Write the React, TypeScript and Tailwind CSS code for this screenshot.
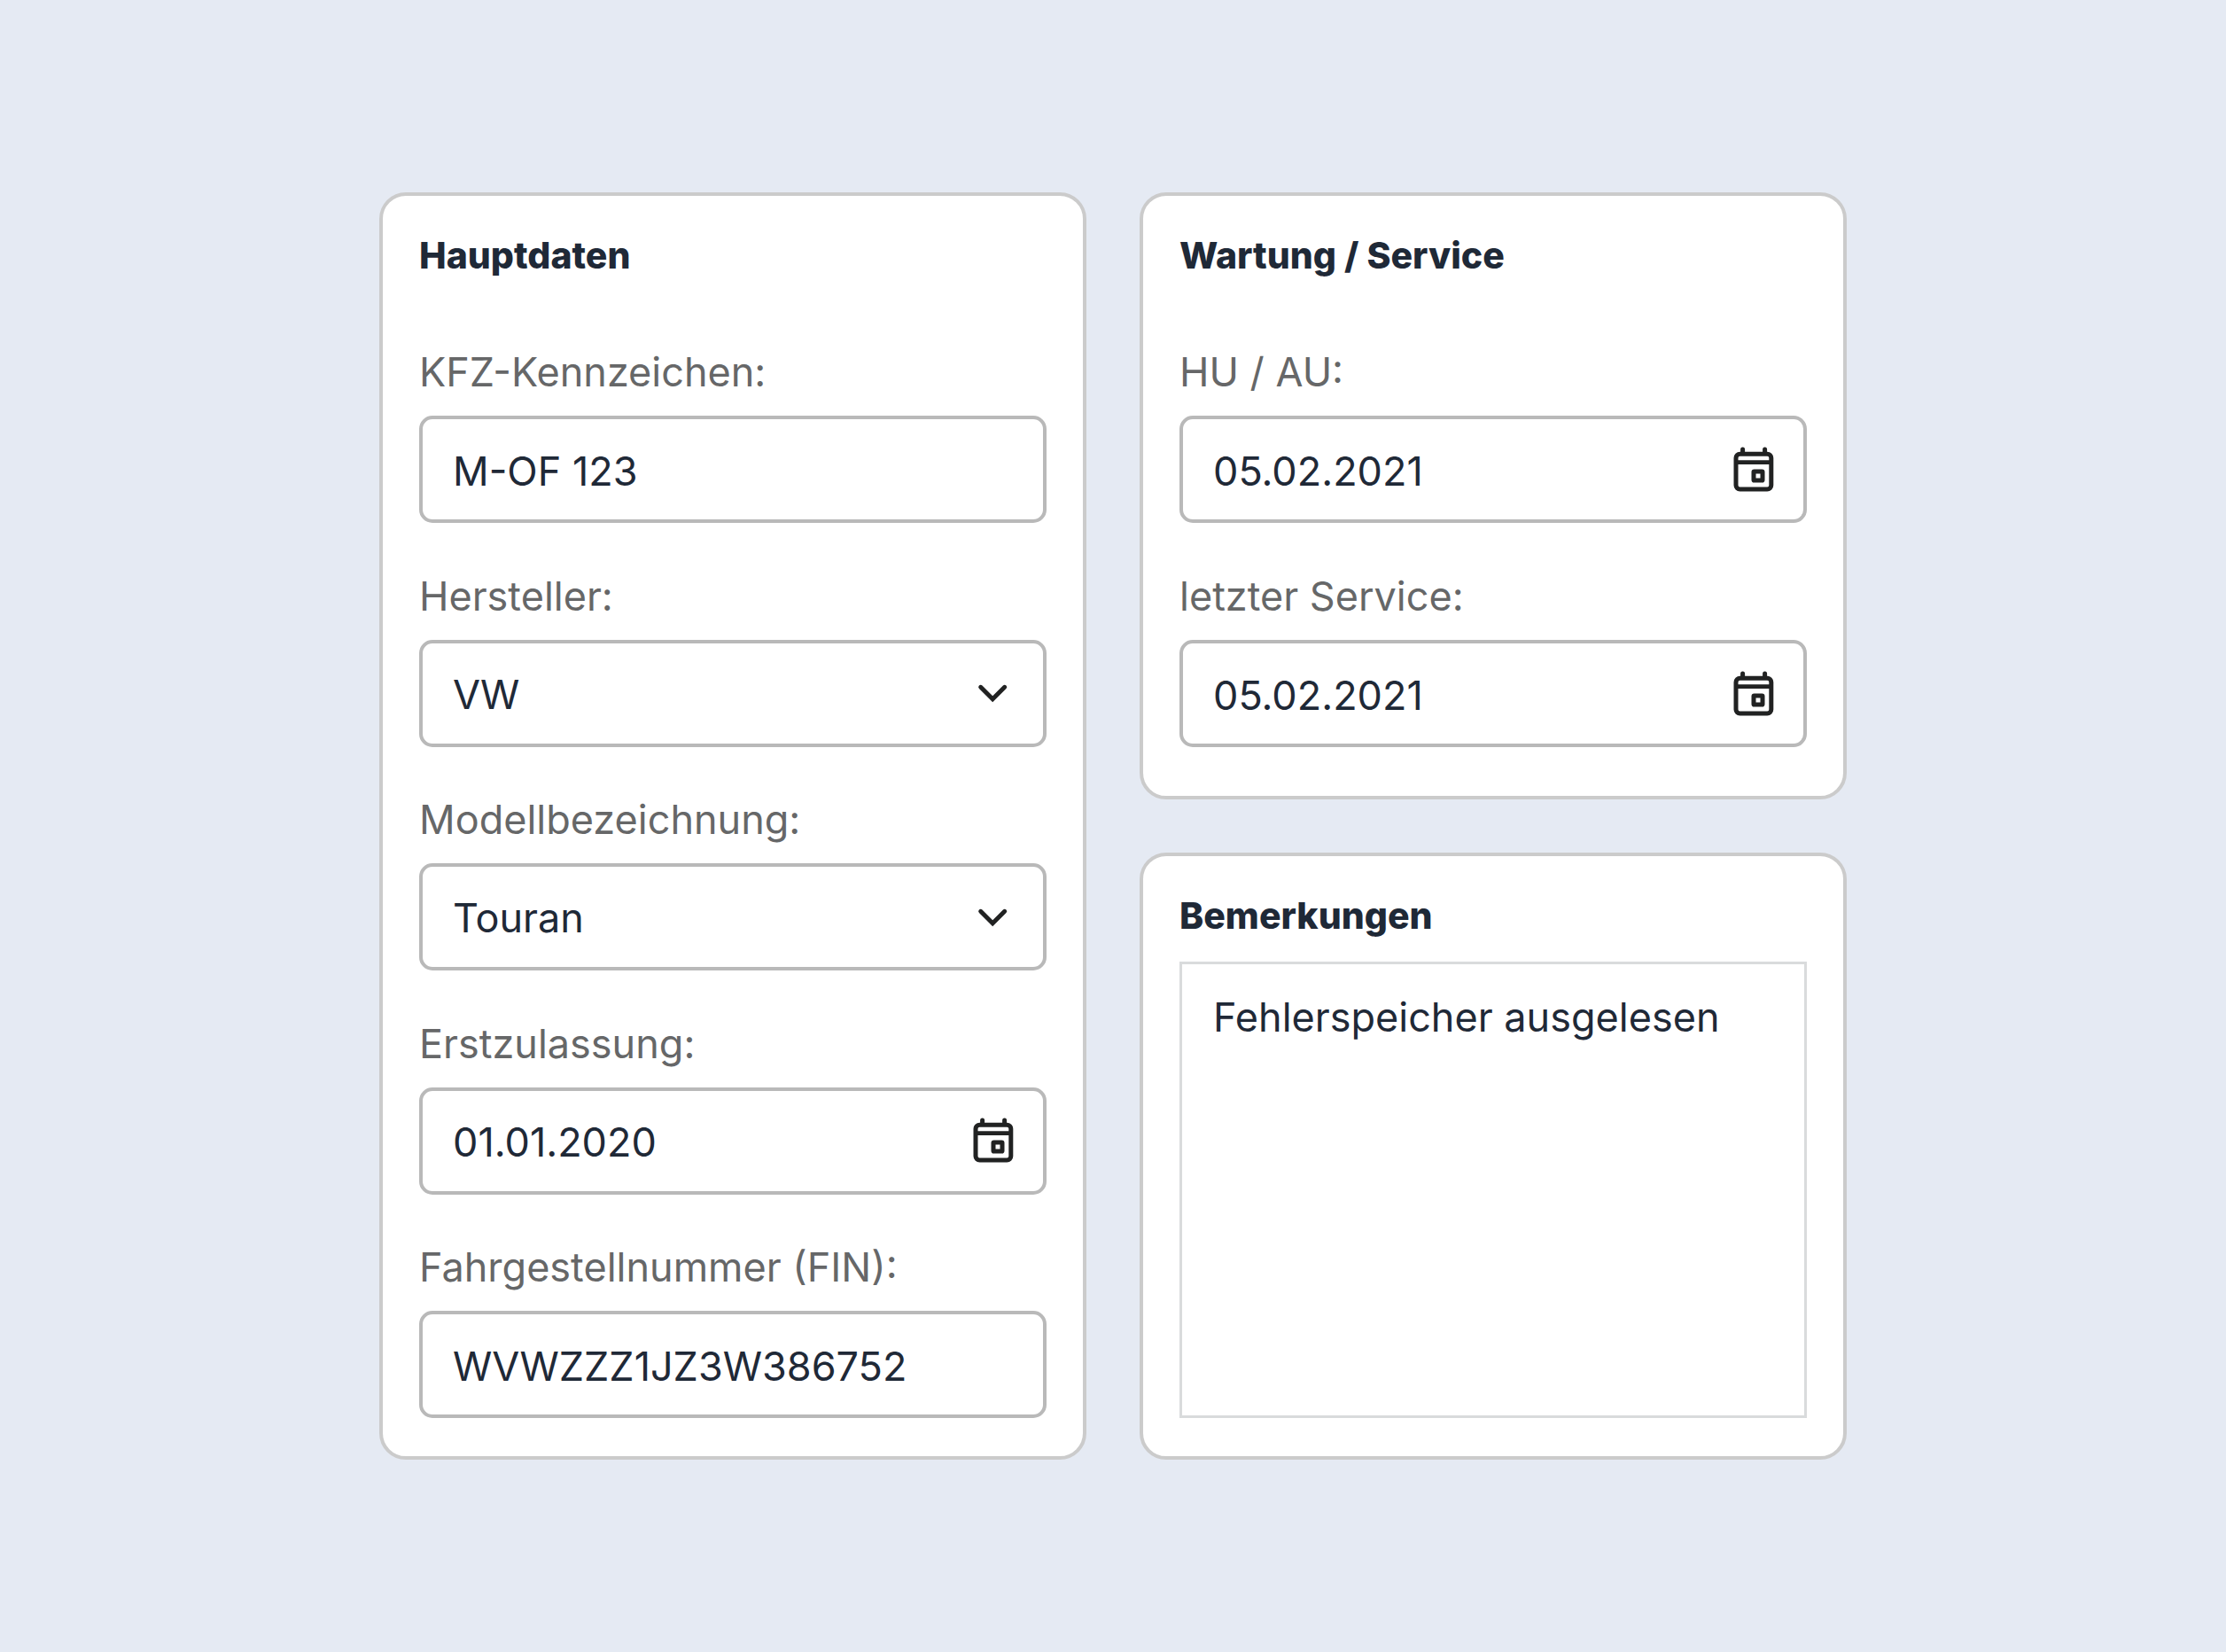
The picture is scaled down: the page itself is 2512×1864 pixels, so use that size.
import { useId, type ReactNode } from "react";

const controlClass =
  "block h-[121px] w-full appearance-none rounded-[15px] border-4 border-[#b9b9b9] bg-white pt-[3px] pl-[34px] pr-[108px] text-[45px] text-[#1f2937] outline-none focus:border-[#6b7280]";

function ChevronIcon() {
  return (
    <svg aria-hidden="true" className="h-12 w-12" viewBox="0 0 48 48" fill="none" stroke="#212222" strokeWidth="5" strokeLinecap="round">
      <path d="M9.7 17.3 23.2 30.7 36.7 17.3" />
    </svg>
  );
}

function CalendarIcon() {
  return (
    <svg aria-hidden="true" className="h-[52px] w-[48px]" viewBox="0 0 48 52" fill="none" stroke="#212222" strokeLinecap="round">
      <rect x="4" y="8.2" width="39.8" height="39.8" rx="4.5" strokeWidth="5" />
      <path d="M4 17.6H44" strokeWidth="4.6" strokeLinecap="butt" />
      <path d="M11.6 2.9V6.5M36.6 2.9V6.5" strokeWidth="5" />
      <rect x="24" y="28" width="10" height="10" rx="0.6" strokeWidth="5" strokeLinejoin="round" />
    </svg>
  );
}

function Card({ title, children }: { title: string; children: ReactNode }) {
  return (
    <section className="flex flex-col rounded-[30px] border-4 border-[#cbcbcb] bg-white px-[41px] pt-[41px] pb-[43px]">
      <h2 className="text-[41px] leading-[52px] font-extrabold text-[#1f2937]">{title}</h2>
      {children}
    </section>
  );
}

function Label({ id, children }: { id: string; children: ReactNode }) {
  return (
    <label htmlFor={id} className="mb-[21px] block text-[45px] leading-[56px] text-[#666768]">
      {children}
    </label>
  );
}

function TextField({ label, value }: { label: string; value: string }) {
  const id = useId();
  return (
    <div>
      <Label id={id}>{label}</Label>
      <input id={id} type="text" defaultValue={value} className={controlClass} />
    </div>
  );
}

function SelectField({ label, options }: { label: string; options: string[] }) {
  const id = useId();
  return (
    <div>
      <Label id={id}>{label}</Label>
      <div className="relative">
        <select id={id} className={controlClass}>
          {options.map((option) => (
            <option key={option}>{option}</option>
          ))}
        </select>
        <span className="pointer-events-none absolute inset-y-0 right-0 flex w-[121px] items-center justify-center">
          <ChevronIcon />
        </span>
      </div>
    </div>
  );
}

function DateField({ label, value }: { label: string; value: string }) {
  const id = useId();
  return (
    <div>
      <Label id={id}>{label}</Label>
      <div className="relative">
        <input id={id} type="text" inputMode="numeric" defaultValue={value} className={controlClass} />
        <button
          type="button"
          aria-label={`${label} Datum wählen`}
          className="absolute inset-y-0 right-0 flex w-[121px] items-center justify-center"
        >
          <CalendarIcon />
        </button>
      </div>
    </div>
  );
}

export default function App() {
  return (
    <main className="flex min-h-screen items-center justify-center bg-[#e5eaf3] p-8 font-['Inter',sans-serif]">
      <form className="grid w-full max-w-[1656px] gap-[60px] md:grid-cols-2">
        <Card title="Hauptdaten">
          <div className="flex flex-1 flex-col justify-between gap-[54px] pt-[78px]">
            <TextField label="KFZ-Kennzeichen:" value="M-OF 123" />
            <SelectField label="Hersteller:" options={["VW", "Audi", "BMW"]} />
            <SelectField label="Modellbezeichnung:" options={["Touran", "Golf", "Passat"]} />
            <DateField label="Erstzulassung:" value="01.01.2020" />
            <TextField label="Fahrgestellnummer (FIN):" value="WVWZZZ1JZ3W386752" />
          </div>
        </Card>
        <div className="flex flex-col gap-[60px]">
          <Card title="Wartung / Service">
            <div className="flex flex-col gap-[55px] pt-[78px] pb-3">
              <DateField label="HU / AU:" value="05.02.2021" />
              <DateField label="letzter Service:" value="05.02.2021" />
            </div>
          </Card>
          <Card title="Bemerkungen">
            <textarea
              aria-label="Bemerkungen"
              defaultValue="Fehlerspeicher ausgelesen"
              className="mt-[26px] block h-[515px] w-full resize-none border-3 border-[#d9dbdc] bg-white px-[35px] py-8 text-[45px] leading-[56px] text-[#1f2937] outline-none"
            />
          </Card>
        </div>
      </form>
    </main>
  );
}
